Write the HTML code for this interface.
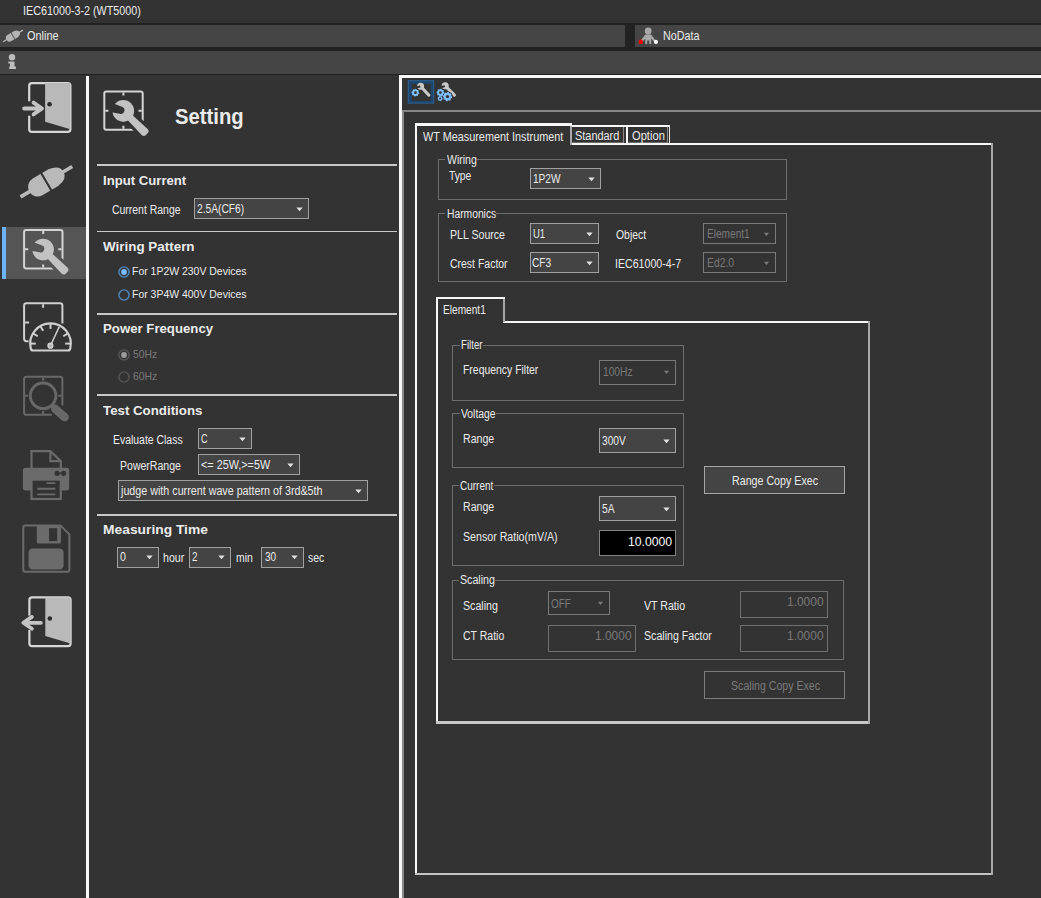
<!DOCTYPE html>
<html><head><meta charset="utf-8"><title>IEC61000-3-2 (WT5000)</title>
<style>
html,body{margin:0;padding:0;background:#333333;}
body{width:1041px;height:898px;position:relative;overflow:hidden;font-family:"Liberation Sans",sans-serif;}
#app div,#app span,#app svg{position:absolute;}
#app span{white-space:pre;line-height:1;transform-origin:0 0;display:block;}
</style></head><body><div id="app" style="position:absolute;left:0;top:0;width:1041px;height:898px;overflow:hidden">
<div style="left:0px;top:23px;width:1041px;height:2px;background:#222222"></div>
<div style="left:0px;top:25px;width:625px;height:22px;background:#454545"></div>
<div style="left:625px;top:25px;width:10px;height:22px;background:#222222"></div>
<div style="left:635px;top:25px;width:406px;height:22px;background:#454545"></div>
<div style="left:0px;top:47px;width:1041px;height:4px;background:#222222"></div>
<div style="left:0px;top:51px;width:1041px;height:22.5px;background:#454545"></div>
<div style="left:0px;top:73.5px;width:1041px;height:1.5px;background:#222222"></div>
<div style="left:2px;top:227px;width:85px;height:52px;background:#555555"></div>
<div style="left:2px;top:227px;width:4.2px;height:52px;background:#6cb4f7"></div>
<div style="left:86.3px;top:75.5px;width:3.1px;height:830px;background:#f8f8f8"></div>
<div style="left:97px;top:164.3px;width:299.5px;height:1.9px;background:#c8c8c8"></div>
<div style="left:97px;top:230.6px;width:299.5px;height:1.9px;background:#c8c8c8"></div>
<div style="left:97px;top:313.1px;width:299.5px;height:1.9px;background:#c8c8c8"></div>
<div style="left:97px;top:393.9px;width:299.5px;height:1.9px;background:#c8c8c8"></div>
<div style="left:97px;top:514.0px;width:299.5px;height:1.9px;background:#c8c8c8"></div>
<div style="left:399px;top:75.3px;width:642px;height:2.7px;background:#f8f8f8"></div>
<div style="left:399px;top:75.3px;width:3px;height:830px;background:#f8f8f8"></div>
<div style="left:402px;top:112px;width:1.6px;height:790px;background:#8a8a8a"></div>
<div style="left:402px;top:110.3px;width:639px;height:1.9px;background:#858585"></div>
<svg style="left:0;top:0" width="1041" height="898" viewBox="0 0 1041 898"><g transform="translate(13,35.9) rotate(-30.4) scale(0.385)"><rect x="-30" y="-1.8" width="60" height="3.6" fill="#b4b4b4"/><path d="M-10.2 -9.6H8Q19.8 -8.3 19.8 0Q19.8 8.3 8 9.6H-10.2A9.6 9.6 0 0 1 -10.2 -9.6z" fill="#b4b4b4"/><rect x="-1.2" y="-11" width="2.1" height="22" fill="#454545"/></g><circle cx="12" cy="57.2" r="3.2" fill="#bdbdbd"/><path d="M8.3 61.6H14.5V66.6H15.9V69H9.2V66.6H10V63.6H8.3z" fill="#bdbdbd"/><circle cx="648.2" cy="31" r="3.4" fill="#a9a9a9"/><path d="M645.4 34.6H651L656.3 41.2L654.6 42.4L651.2 38.6V44H649.3V40.4H647.2V44H645.3V38.6L642 42.4L640.2 41.2z" fill="#a9a9a9"/><circle cx="640.7" cy="41.9" r="2.3" fill="#f00000"/><circle cx="655.9" cy="41.9" r="2.1" fill="#ffffff"/><rect x="29.200000000000003" y="83.1" width="41.2" height="48.8" rx="2.6" fill="none" stroke="#d6d6d6" stroke-width="2.2"/><path d="M45.1 83.1H70.4V129.2L45.1 121.8z" fill="#b9b9b9"/><circle cx="49.6" cy="104.2" r="2.3" fill="#2b2b2b"/><rect x="27.1" y="101.3" width="4.5" height="14.4" fill="#333333"/><path d="M24.1 108.5H41.7M33.5 102.6L42.1 108.5L33.5 114.4" fill="none" stroke="#c4c4c4" stroke-width="3.8" stroke-linecap="round" stroke-linejoin="round"/><g transform="translate(46.4,181.7) rotate(-30.4) scale(1)"><rect x="-30" y="-1.8" width="60" height="3.6" fill="#b9b9b9"/><path d="M-10.2 -9.6H8Q19.8 -8.3 19.8 0Q19.8 8.3 8 9.6H-10.2A9.6 9.6 0 0 1 -10.2 -9.6z" fill="#b9b9b9"/><rect x="-1.2" y="-11" width="2.1" height="22" fill="#333333"/></g><rect x="24.1" y="230.0" width="38.4" height="38.4" rx="2.2" fill="none" stroke="#d4d4d4" stroke-width="2"/><path d="M43.2 231.0v3M43.2 267.4v-3M25.1 249.3h3.2M61.5 249.3h-3.2" stroke="#d4d4d4" stroke-width="2" fill="none"/><g transform="translate(43.1,249.5) rotate(44.5)"><path d="M6 -3.3L29.6 -4.2Q33 -4.2 33 -1.4V1.4Q33 4.2 29.6 4.2L6 3.3z" fill="#555555" stroke="#555555" stroke-width="6.4" stroke-linejoin="round"/></g><circle cx="43.1" cy="249.5" r="12.3" fill="#555555"/><g transform="translate(43.1,249.5) rotate(44.5)"><path d="M6 -3.3L29.6 -4.2Q33 -4.2 33 -1.4V1.4Q33 4.2 29.6 4.2L6 3.3z" fill="#c2c2c2"/></g><circle cx="43.1" cy="249.5" r="10.8" fill="#c2c2c2"/><g transform="translate(43.1,249.5) rotate(15.7)"><path d="M-14 -4.7L-2.6 -3.7A3.7 3.7 0 0 1 -2.6 3.7L-14 4.7z" fill="#555555"/></g><path d="M28.5 341.2H26.5Q24.1 341.2 24.1 338.8V305.6Q24.1 303.2 26.5 303.2H60Q62.4 303.2 62.4 305.6V323.4" fill="none" stroke="#cfcfcf" stroke-width="2"/><path d="M43.1 304.2v3.6M25.1 322.6h4" stroke="#cfcfcf" stroke-width="2" fill="none"/><path d="M30.64 347.82A20.3 20.3 0 1 1 70.36 347.82Q70.16 350.42 67.76 350.52H33.24Q30.84 350.42 30.64 347.82z" fill="none" stroke="#cfcfcf" stroke-width="2.2"/><line x1="30.70" y1="343.60" x2="35.80" y2="343.60" stroke="#cfcfcf" stroke-width="2"/><line x1="33.35" y1="333.70" x2="37.77" y2="336.25" stroke="#cfcfcf" stroke-width="2"/><line x1="40.60" y1="326.45" x2="43.15" y2="330.87" stroke="#cfcfcf" stroke-width="2"/><line x1="50.50" y1="323.80" x2="50.50" y2="328.90" stroke="#cfcfcf" stroke-width="2"/><line x1="67.65" y1="333.70" x2="63.23" y2="336.25" stroke="#cfcfcf" stroke-width="2"/><line x1="70.30" y1="343.60" x2="65.20" y2="343.60" stroke="#cfcfcf" stroke-width="2"/><line x1="50.4" y1="345.7" x2="59.3" y2="326.6" stroke="#cfcfcf" stroke-width="1.5"/><circle cx="50.4" cy="345.7" r="3.1" fill="#cfcfcf"/><circle cx="50.4" cy="345.7" r="1.3" fill="#aaa"/><path d="M51.9 414.8H26.5Q24.1 414.8 24.1 412.4V379.2Q24.1 376.8 26.5 376.8H60Q62.4 376.8 62.4 379.2V405.6" fill="none" stroke="#686868" stroke-width="2"/><path d="M43.1 377.8v3.6M43.1 413.8v-3.6M25.1 395.8h4M61.4 395.8h-4" stroke="#686868" stroke-width="2" fill="none"/><circle cx="43.1" cy="395.8" r="15.2" fill="#333333"/><line x1="53" y1="406.6" x2="65.2" y2="417.6" stroke="#333333" stroke-width="11.5" stroke-linecap="round"/><circle cx="43.1" cy="395.8" r="12.8" fill="none" stroke="#686868" stroke-width="2.9"/><line x1="55.2" y1="408.8" x2="64.6" y2="417.2" stroke="#686868" stroke-width="8.4" stroke-linecap="round"/><line x1="51.5" y1="404.8" x2="55" y2="408.4" stroke="#686868" stroke-width="3.4"/><path d="M31.5 468V451.1H50.4L60.8 461.2V468" fill="none" stroke="#6b6b6b" stroke-width="2.2"/><path d="M50.4 451.1V461.2H60.8" fill="none" stroke="#6b6b6b" stroke-width="2.2"/><rect x="22.9" y="467.7" width="46.3" height="22.7" rx="2.6" fill="#6b6b6b"/><circle cx="57.1" cy="473.3" r="2.6" fill="#353535"/><circle cx="63.6" cy="473.3" r="2.6" fill="#353535"/><rect x="57" y="472.6" width="6.6" height="1.4" fill="#353535"/><rect x="31.5" y="479.6" width="29.3" height="19.4" fill="#333333" stroke="#6b6b6b" stroke-width="2.2"/><path d="M46.5 483.1H55.4M37.3 488.8H55.4M37.3 494.4H55.4" stroke="#6b6b6b" stroke-width="1.9" fill="none"/><path d="M25.3 525.4H60.4L69.4 534.4V569.8Q69.4 571.8 67.4 571.8H25.3Q23.3 571.8 23.3 569.8V527.4Q23.3 525.4 25.3 525.4z" fill="none" stroke="#6b6b6b" stroke-width="2"/><path d="M36.8 525.4H60.9V542Q60.9 543.5 59.4 543.5H38.3Q36.8 543.5 36.8 542z" fill="#6b6b6b"/><rect x="49.1" y="528.2" width="8.1" height="12.9" fill="#333333"/><rect x="28.5" y="548.6" width="35.1" height="20.8" rx="4.2" fill="#6b6b6b"/><rect x="29.400000000000002" y="597.4" width="41.2" height="48.8" rx="2.6" fill="none" stroke="#d6d6d6" stroke-width="2.2"/><path d="M45.3 597.4H70.6V643.5L45.3 636.0999999999999z" fill="#b9b9b9"/><circle cx="49.8" cy="618.5" r="2.3" fill="#2b2b2b"/><rect x="27.3" y="615.5999999999999" width="4.5" height="14.4" fill="#333333"/><path d="M23.700000000000003 622.8H40.9M31.900000000000002 616.9L23.3 622.8L31.900000000000002 628.6999999999999" fill="none" stroke="#c4c4c4" stroke-width="3.8" stroke-linecap="round" stroke-linejoin="round"/><rect x="104.3" y="91.4" width="38.4" height="38.4" rx="2.2" fill="none" stroke="#d4d4d4" stroke-width="2"/><path d="M123.4 92.4v3M123.4 128.8v-3M105.3 110.7h3.2M141.7 110.7h-3.2" stroke="#d4d4d4" stroke-width="2" fill="none"/><g transform="translate(123.3,110.9) rotate(44.5)"><path d="M6 -3.3L29.6 -4.2Q33 -4.2 33 -1.4V1.4Q33 4.2 29.6 4.2L6 3.3z" fill="#333333" stroke="#333333" stroke-width="6.4" stroke-linejoin="round"/></g><circle cx="123.3" cy="110.9" r="12.3" fill="#333333"/><g transform="translate(123.3,110.9) rotate(44.5)"><path d="M6 -3.3L29.6 -4.2Q33 -4.2 33 -1.4V1.4Q33 4.2 29.6 4.2L6 3.3z" fill="#c2c2c2"/></g><circle cx="123.3" cy="110.9" r="10.8" fill="#c2c2c2"/><g transform="translate(123.3,110.9) rotate(15.7)"><path d="M-14 -4.7L-2.6 -3.7A3.7 3.7 0 0 1 -2.6 3.7L-14 4.7z" fill="#333333"/></g><rect x="408.3" y="80.7" width="25.4" height="22.4" fill="#1f456a" stroke="#2b6498" stroke-width="1"/><rect x="412" y="84" width="18.6" height="17" fill="#333333"/><line x1="420.6" y1="86.2" x2="428.9" y2="95.2" stroke="#c9c9c9" stroke-width="3.1" stroke-linecap="round"/><circle cx="420.6" cy="86.2" r="3.5" fill="#c9c9c9"/><g transform="translate(420.6,86.2) rotate(-20)"><rect x="-5" y="-1.1" width="4.6" height="2.2" fill="#333333"/></g><polygon points="419.30,92.89 419.18,93.65 418.36,94.10 418.03,94.65 418.02,95.59 417.41,96.05 416.50,95.78 415.88,95.94 415.21,96.60 414.45,96.48 414.00,95.66 413.45,95.33 412.51,95.32 412.05,94.71 412.32,93.80 412.16,93.18 411.50,92.51 411.62,91.75 412.44,91.30 412.77,90.75 412.78,89.81 413.39,89.35 414.30,89.62 414.92,89.46 415.59,88.80 416.35,88.92 416.80,89.74 417.35,90.07 418.29,90.08 418.75,90.69 418.48,91.60 418.64,92.22" fill="#7fc1ff"/><circle cx="415.4" cy="92.7" r="1.4" fill="#333333"/><line x1="445.2" y1="85.8" x2="454.4" y2="95.2" stroke="#c9c9c9" stroke-width="3.1" stroke-linecap="round"/><circle cx="445.2" cy="85.8" r="3.5" fill="#c9c9c9"/><g transform="translate(445.2,85.8) rotate(-20)"><rect x="-5" y="-1.1" width="4.6" height="2.2" fill="#333333"/></g><circle cx="447.5" cy="96.6" r="5.3" fill="#333333"/><polygon points="444.30,92.79 444.18,93.55 443.36,94.00 443.03,94.55 443.02,95.49 442.41,95.95 441.50,95.68 440.88,95.84 440.21,96.50 439.45,96.38 439.00,95.56 438.45,95.23 437.51,95.22 437.05,94.61 437.32,93.70 437.16,93.08 436.50,92.41 436.62,91.65 437.44,91.20 437.77,90.65 437.78,89.71 438.39,89.25 439.30,89.52 439.92,89.36 440.59,88.70 441.35,88.82 441.80,89.64 442.35,89.97 443.29,89.98 443.75,90.59 443.48,91.50 443.64,92.12" fill="#7fc1ff"/><circle cx="440.4" cy="92.6" r="1.4" fill="#333333"/><polygon points="442.69,98.67 442.56,99.34 441.92,99.71 441.54,100.14 441.25,100.83 440.61,101.05 439.96,100.68 439.40,100.57 438.66,100.66 438.15,100.21 438.14,99.47 437.96,98.93 437.51,98.33 437.64,97.66 438.28,97.29 438.66,96.86 438.95,96.17 439.59,95.95 440.24,96.32 440.80,96.43 441.54,96.34 442.05,96.79 442.06,97.53 442.24,98.07" fill="#7fc1ff"/><circle cx="440.1" cy="98.5" r="1.0" fill="#333333"/><polygon points="452.19,96.83 452.06,97.74 451.07,98.29 450.67,98.95 450.66,100.08 449.92,100.63 448.83,100.32 448.08,100.51 447.27,101.29 446.36,101.16 445.81,100.17 445.15,99.77 444.02,99.76 443.47,99.02 443.78,97.93 443.59,97.18 442.81,96.37 442.94,95.46 443.93,94.91 444.33,94.25 444.34,93.12 445.08,92.57 446.17,92.88 446.92,92.69 447.73,91.91 448.64,92.04 449.19,93.03 449.85,93.43 450.98,93.44 451.53,94.18 451.22,95.27 451.41,96.02" fill="#7fc1ff"/><circle cx="447.5" cy="96.6" r="1.7" fill="#333333"/></svg>
<div style="left:194px;top:198px;width:115px;height:21px;border:1.4px solid #a0a0a0;background:#444444;box-sizing:border-box;"></div><svg style="left:295.9px;top:206.5px" width="7" height="5" viewBox="0 0 7 5"><path d="M0.3 0.6h6.4L3.5 4.2z" fill="#e0e0e0"/></svg>
<div style="left:198px;top:428px;width:54.3px;height:21px;border:1.4px solid #a0a0a0;background:#444444;box-sizing:border-box;"></div><svg style="left:239.20000000000002px;top:436.5px" width="7" height="5" viewBox="0 0 7 5"><path d="M0.3 0.6h6.4L3.5 4.2z" fill="#e0e0e0"/></svg>
<div style="left:198px;top:454.2px;width:101.6px;height:21px;border:1.4px solid #a0a0a0;background:#444444;box-sizing:border-box;"></div><svg style="left:286.5px;top:462.7px" width="7" height="5" viewBox="0 0 7 5"><path d="M0.3 0.6h6.4L3.5 4.2z" fill="#e0e0e0"/></svg>
<div style="left:118.4px;top:480px;width:249.5px;height:21px;border:1.4px solid #a0a0a0;background:#444444;box-sizing:border-box;"></div><svg style="left:354.79999999999995px;top:488.5px" width="7" height="5" viewBox="0 0 7 5"><path d="M0.3 0.6h6.4L3.5 4.2z" fill="#e0e0e0"/></svg>
<div style="left:116.5px;top:546.5px;width:42.4px;height:21px;border:1.4px solid #a0a0a0;background:#444444;box-sizing:border-box;"></div><svg style="left:145.8px;top:555.0px" width="7" height="5" viewBox="0 0 7 5"><path d="M0.3 0.6h6.4L3.5 4.2z" fill="#e0e0e0"/></svg>
<div style="left:189px;top:546.5px;width:42.2px;height:21px;border:1.4px solid #a0a0a0;background:#444444;box-sizing:border-box;"></div><svg style="left:218.1px;top:555.0px" width="7" height="5" viewBox="0 0 7 5"><path d="M0.3 0.6h6.4L3.5 4.2z" fill="#e0e0e0"/></svg>
<div style="left:261px;top:546.5px;width:42.8px;height:21px;border:1.4px solid #a0a0a0;background:#444444;box-sizing:border-box;"></div><svg style="left:290.7px;top:555.0px" width="7" height="5" viewBox="0 0 7 5"><path d="M0.3 0.6h6.4L3.5 4.2z" fill="#e0e0e0"/></svg>
<svg style="left:116.85px;top:265px" width="14" height="14" viewBox="0 0 14 14"><circle cx="7" cy="7" r="5.1" fill="#333333" stroke="#5289bd" stroke-width="1.4"/><circle cx="7" cy="7" r="2.9" fill="#78bbff"/></svg>
<svg style="left:116.85px;top:288px" width="14" height="14" viewBox="0 0 14 14"><circle cx="7" cy="7" r="5.1" fill="#333333" stroke="#5289bd" stroke-width="1.4"/></svg>
<svg style="left:116.8px;top:347.9px" width="14" height="14" viewBox="0 0 14 14"><circle cx="7" cy="7" r="5.1" fill="#333333" stroke="#565656" stroke-width="1.4"/><circle cx="7" cy="7" r="2.9" fill="#9c9c9c"/></svg>
<svg style="left:116.8px;top:370.2px" width="14" height="14" viewBox="0 0 14 14"><circle cx="7" cy="7" r="5.1" fill="#333333" stroke="#565656" stroke-width="1.4"/></svg>
<div style="left:415px;top:143px;width:578px;height:2.2px;background:#f8f8f8"></div>
<div style="left:415px;top:124px;width:2.3px;height:751px;background:#f8f8f8"></div>
<div style="left:415px;top:872.7px;width:578.3px;height:2.2px;background:#c4c4c4"></div>
<div style="left:991.3px;top:143px;width:2.2px;height:732px;background:#a8a8a8"></div>
<div style="left:415px;top:123.3px;width:156.6px;height:2.7px;background:#f8f8f8"></div>
<div style="left:569.6px;top:125.5px;width:2.0px;height:19.4px;background:#a8a8a8"></div>
<div style="left:417.3px;top:126px;width:152.3px;height:19.5px;background:#333333"></div>
<div style="left:571.7px;top:125.4px;width:54.3px;height:2.0px;background:#f8f8f8"></div><div style="left:622.6px;top:127px;width:1.3px;height:16.2px;background:#8a8a8a"></div><div style="left:572.2px;top:142.2px;width:50.4px;height:0.9px;background:#6a6a6a"></div>
<div style="left:626.0px;top:125.4px;width:44.4px;height:2.0px;background:#f8f8f8"></div><div style="left:626.0px;top:125.4px;width:2.0px;height:18px;background:#f8f8f8"></div><div style="left:667.0px;top:127px;width:1.3px;height:16.2px;background:#8a8a8a"></div><div style="left:668.6px;top:125.4px;width:1.8px;height:18px;background:#e6e6e6"></div><div style="left:628.0px;top:142.2px;width:39.0px;height:0.9px;background:#6a6a6a"></div>
<div style="left:438px;top:159.2px;width:349.3px;height:40.8px;border:1px solid #6e6e6e;box-sizing:border-box;"></div><div style="left:445.40000000000003px;top:158.2px;width:31.0px;height:3px;background:#333333"></div>
<div style="left:438px;top:213px;width:349.3px;height:68.6px;border:1px solid #6e6e6e;box-sizing:border-box;"></div><div style="left:445.40000000000003px;top:212px;width:51.0px;height:3px;background:#333333"></div>
<div style="left:529.5px;top:168px;width:71.5px;height:21px;border:1.4px solid #a0a0a0;background:#444444;box-sizing:border-box;"></div><svg style="left:587.9px;top:176.5px" width="7" height="5" viewBox="0 0 7 5"><path d="M0.3 0.6h6.4L3.5 4.2z" fill="#e0e0e0"/></svg>
<div style="left:529.5px;top:223.3px;width:69.5px;height:20.7px;border:1.4px solid #a0a0a0;background:#444444;box-sizing:border-box;"></div><svg style="left:585.9px;top:231.65px" width="7" height="5" viewBox="0 0 7 5"><path d="M0.3 0.6h6.4L3.5 4.2z" fill="#e0e0e0"/></svg>
<div style="left:529.5px;top:252.2px;width:69.5px;height:20.8px;border:1.4px solid #a0a0a0;background:#444444;box-sizing:border-box;"></div><svg style="left:585.9px;top:260.59999999999997px" width="7" height="5" viewBox="0 0 7 5"><path d="M0.3 0.6h6.4L3.5 4.2z" fill="#e0e0e0"/></svg>
<div style="left:703.3px;top:223.3px;width:72.8px;height:20.7px;border:1.2px solid #7a7a7a;background:#333333;box-sizing:border-box;"></div><svg style="left:762.9999999999999px;top:231.65px" width="7" height="5" viewBox="0 0 7 5"><path d="M0.9 0.8h5.2L3.5 3.9z" fill="#7a7a7a"/></svg>
<div style="left:703.3px;top:252.2px;width:72.8px;height:20.8px;border:1.2px solid #7a7a7a;background:#333333;box-sizing:border-box;"></div><svg style="left:762.9999999999999px;top:260.59999999999997px" width="7" height="5" viewBox="0 0 7 5"><path d="M0.9 0.8h5.2L3.5 3.9z" fill="#7a7a7a"/></svg>
<div style="left:436px;top:321.2px;width:434px;height:2.3px;background:#f6f6f6"></div>
<div style="left:436px;top:297px;width:2.4px;height:427px;background:#f6f6f6"></div>
<div style="left:436px;top:721.2px;width:434.1px;height:2.4px;background:#c8c8c8"></div>
<div style="left:867.8px;top:321.2px;width:2.3px;height:402.4px;background:#a8a8a8"></div>
<div style="left:436px;top:297px;width:69.2px;height:2.5px;background:#f6f6f6"></div>
<div style="left:503.1px;top:299px;width:2.1px;height:22.5px;background:#a6a6a6"></div>
<div style="left:438.4px;top:299.4px;width:64.7px;height:24.5px;background:#333333"></div>
<div style="left:452.3px;top:345px;width:231.8px;height:55.8px;border:1px solid #6e6e6e;box-sizing:border-box;"></div><div style="left:459.5px;top:344px;width:23.3px;height:3px;background:#333333"></div>
<div style="left:452.3px;top:413.4px;width:231.8px;height:55px;border:1px solid #6e6e6e;box-sizing:border-box;"></div><div style="left:459.5px;top:412.4px;width:36.699999999999996px;height:3px;background:#333333"></div>
<div style="left:452.3px;top:485.4px;width:231.8px;height:81px;border:1px solid #6e6e6e;box-sizing:border-box;"></div><div style="left:458.5px;top:484.4px;width:35.599999999999994px;height:3px;background:#333333"></div>
<div style="left:452.3px;top:579.9px;width:391.7px;height:80.6px;border:1px solid #6e6e6e;box-sizing:border-box;"></div><div style="left:459.2px;top:578.9px;width:36.099999999999994px;height:3px;background:#333333"></div>
<div style="left:599px;top:359.5px;width:77.2px;height:25.5px;border:1.2px solid #7a7a7a;background:#333333;box-sizing:border-box;"></div><svg style="left:663.1px;top:370.25px" width="7" height="5" viewBox="0 0 7 5"><path d="M0.9 0.8h5.2L3.5 3.9z" fill="#7a7a7a"/></svg>
<div style="left:599px;top:428px;width:77.3px;height:25px;border:1.4px solid #a0a0a0;background:#444444;box-sizing:border-box;"></div><svg style="left:663.1999999999999px;top:438.5px" width="7" height="5" viewBox="0 0 7 5"><path d="M0.3 0.6h6.4L3.5 4.2z" fill="#e0e0e0"/></svg>
<div style="left:599px;top:496.3px;width:77.3px;height:25px;border:1.4px solid #a0a0a0;background:#444444;box-sizing:border-box;"></div><svg style="left:663.1999999999999px;top:506.8px" width="7" height="5" viewBox="0 0 7 5"><path d="M0.3 0.6h6.4L3.5 4.2z" fill="#e0e0e0"/></svg>
<div style="left:599px;top:530.3px;width:77.3px;height:26px;background:#000;border:1.2px solid #848484;box-sizing:border-box;"></div>
<div style="left:547.8px;top:591px;width:62.7px;height:24.3px;border:1.2px solid #7a7a7a;background:#333333;box-sizing:border-box;"></div><svg style="left:597.4px;top:601.15px" width="7" height="5" viewBox="0 0 7 5"><path d="M0.9 0.8h5.2L3.5 3.9z" fill="#7a7a7a"/></svg>
<div style="left:739.5px;top:591px;width:88.4px;height:27.3px;border:1px solid #707070;box-sizing:border-box;background:#333333;"></div>
<div style="left:739.5px;top:625.2px;width:88.4px;height:27.3px;border:1px solid #707070;box-sizing:border-box;background:#333333;"></div>
<div style="left:547.8px;top:625.2px;width:88.4px;height:27.3px;border:1px solid #707070;box-sizing:border-box;background:#333333;"></div>
<div style="left:704.2px;top:466.2px;width:141.3px;height:27.7px;background:#444444;border:1.3px solid #a6a6a6;box-sizing:border-box;"></div>
<div style="left:704.2px;top:671.3px;width:141.3px;height:27.5px;background:#333333;border:1px solid #7d7d7d;box-sizing:border-box;"></div>
<span style="left:23.10px;top:5.04px;font-size:12px;font-weight:normal;color:#ebebeb;transform:scaleX(0.8973)">IEC61000-3-2 (WT5000)</span>
<span style="left:27.00px;top:30.14px;font-size:12px;font-weight:normal;color:#ebebeb;transform:scaleX(0.9082)">Online</span>
<span style="left:662.80px;top:29.64px;font-size:12px;font-weight:normal;color:#ebebeb;transform:scaleX(0.8997)">NoData</span>
<span style="left:174.60px;top:106.54px;font-size:21.33px;font-weight:bold;color:#ebebeb;transform:scaleX(0.9502)">Setting</span>
<span style="left:103.00px;top:173.92px;font-size:13.33px;font-weight:bold;color:#ebebeb;transform:scaleX(0.9863)">Input Current</span>
<span style="left:112.20px;top:203.84px;font-size:12px;font-weight:normal;color:#ebebeb;transform:scaleX(0.8705)">Current Range</span>
<span style="left:197.30px;top:202.84px;font-size:12px;font-weight:normal;color:#ebebeb;transform:scaleX(0.8527)">2.5A(CF6)</span>
<span style="left:102.70px;top:239.72px;font-size:13.33px;font-weight:bold;color:#ebebeb;transform:scaleX(1.0064)">Wiring Pattern</span>
<span style="left:131.90px;top:265.79px;font-size:11px;font-weight:normal;color:#ebebeb;transform:scaleX(0.9509)">For 1P2W 230V Devices</span>
<span style="left:131.90px;top:288.79px;font-size:11px;font-weight:normal;color:#ebebeb;transform:scaleX(0.9509)">For 3P4W 400V Devices</span>
<span style="left:103.00px;top:322.02px;font-size:13.33px;font-weight:bold;color:#ebebeb;transform:scaleX(0.9911)">Power Frequency</span>
<span style="left:132.80px;top:349.49px;font-size:11px;font-weight:normal;color:#7a7a7a;transform:scaleX(0.9413)">50Hz</span>
<span style="left:132.80px;top:371.39px;font-size:11px;font-weight:normal;color:#7a7a7a;transform:scaleX(0.9413)">60Hz</span>
<span style="left:103.10px;top:403.62px;font-size:13.33px;font-weight:bold;color:#ebebeb;transform:scaleX(0.9970)">Test Conditions</span>
<span style="left:112.70px;top:433.84px;font-size:12px;font-weight:normal;color:#ebebeb;transform:scaleX(0.8696)">Evaluate Class</span>
<span style="left:200.70px;top:432.84px;font-size:12px;font-weight:normal;color:#ebebeb;transform:scaleX(0.7556)">C</span>
<span style="left:119.90px;top:459.74px;font-size:12px;font-weight:normal;color:#ebebeb;transform:scaleX(0.8780)">PowerRange</span>
<span style="left:201.00px;top:458.84px;font-size:12px;font-weight:normal;color:#ebebeb;transform:scaleX(0.9007)">&lt;= 25W,&gt;=5W</span>
<span style="left:121.29px;top:485.14px;font-size:12px;font-weight:normal;color:#ebebeb;transform:scaleX(0.8938)">judge with current wave pattern of 3rd&amp;5th</span>
<span style="left:103.00px;top:523.22px;font-size:13.33px;font-weight:bold;color:#ebebeb;transform:scaleX(1.0366)">Measuring Time</span>
<span style="left:119.60px;top:551.34px;font-size:12px;font-weight:normal;color:#ebebeb;transform:scaleX(0.8857)">0</span>
<span style="left:163.40px;top:552.14px;font-size:12px;font-weight:normal;color:#ebebeb;transform:scaleX(0.8825)">hour</span>
<span style="left:191.90px;top:551.34px;font-size:12px;font-weight:normal;color:#ebebeb;transform:scaleX(0.8286)">2</span>
<span style="left:235.60px;top:552.14px;font-size:12px;font-weight:normal;color:#ebebeb;transform:scaleX(0.8681)">min</span>
<span style="left:264.60px;top:551.34px;font-size:12px;font-weight:normal;color:#ebebeb;transform:scaleX(0.8337)">30</span>
<span style="left:308.40px;top:552.14px;font-size:12px;font-weight:normal;color:#ebebeb;transform:scaleX(0.8622)">sec</span>
<span style="left:422.60px;top:130.84px;font-size:12px;font-weight:normal;color:#ebebeb;transform:scaleX(0.9042)">WT Measurement Instrument</span>
<span style="left:575.20px;top:129.54px;font-size:12px;font-weight:normal;color:#ebebeb;transform:scaleX(0.9099)">Standard</span>
<span style="left:631.60px;top:129.54px;font-size:12px;font-weight:normal;color:#ebebeb;transform:scaleX(0.9284)">Option</span>
<span style="left:446.60px;top:154.14px;font-size:12px;font-weight:normal;color:#ebebeb;transform:scaleX(0.8761)">Wiring</span>
<span style="left:449.20px;top:169.84px;font-size:12px;font-weight:normal;color:#ebebeb;transform:scaleX(0.8580)">Type</span>
<span style="left:533.40px;top:172.54px;font-size:12px;font-weight:normal;color:#ebebeb;transform:scaleX(0.8425)">1P2W</span>
<span style="left:446.60px;top:207.84px;font-size:12px;font-weight:normal;color:#ebebeb;transform:scaleX(0.8580)">Harmonics</span>
<span style="left:450.30px;top:228.64px;font-size:12px;font-weight:normal;color:#ebebeb;transform:scaleX(0.8837)">PLL Source</span>
<span style="left:533.00px;top:227.84px;font-size:12px;font-weight:normal;color:#ebebeb;transform:scaleX(0.7915)">U1</span>
<span style="left:615.60px;top:228.64px;font-size:12px;font-weight:normal;color:#ebebeb;transform:scaleX(0.8685)">Object</span>
<span style="left:706.90px;top:227.84px;font-size:12px;font-weight:normal;color:#7a7a7a;transform:scaleX(0.8428)">Element1</span>
<span style="left:450.00px;top:257.84px;font-size:12px;font-weight:normal;color:#ebebeb;transform:scaleX(0.8725)">Crest Factor</span>
<span style="left:532.30px;top:256.94px;font-size:12px;font-weight:normal;color:#ebebeb;transform:scaleX(0.8480)">CF3</span>
<span style="left:615.12px;top:258.14px;font-size:12px;font-weight:normal;color:#ebebeb;transform:scaleX(0.8847)">IEC61000-4-7</span>
<span style="left:706.90px;top:256.84px;font-size:12px;font-weight:normal;color:#7a7a7a;transform:scaleX(0.8616)">Ed2.0</span>
<span style="left:443.40px;top:304.04px;font-size:12px;font-weight:normal;color:#ebebeb;transform:scaleX(0.8447)">Element1</span>
<span style="left:460.70px;top:339.44px;font-size:12px;font-weight:normal;color:#ebebeb;transform:scaleX(0.8062)">Filter</span>
<span style="left:463.40px;top:364.34px;font-size:12px;font-weight:normal;color:#ebebeb;transform:scaleX(0.8685)">Frequency Filter</span>
<span style="left:602.70px;top:366.44px;font-size:12px;font-weight:normal;color:#7a7a7a;transform:scaleX(0.8505)">100Hz</span>
<span style="left:460.70px;top:407.54px;font-size:12px;font-weight:normal;color:#ebebeb;transform:scaleX(0.8646)">Voltage</span>
<span style="left:463.40px;top:432.84px;font-size:12px;font-weight:normal;color:#ebebeb;transform:scaleX(0.8827)">Range</span>
<span style="left:602.30px;top:434.84px;font-size:12px;font-weight:normal;color:#ebebeb;transform:scaleX(0.8493)">300V</span>
<span style="left:459.70px;top:479.84px;font-size:12px;font-weight:normal;color:#ebebeb;transform:scaleX(0.8309)">Current</span>
<span style="left:463.40px;top:500.84px;font-size:12px;font-weight:normal;color:#ebebeb;transform:scaleX(0.8827)">Range</span>
<span style="left:602.40px;top:502.64px;font-size:12px;font-weight:normal;color:#ebebeb;transform:scaleX(0.8587)">5A</span>
<span style="left:463.40px;top:531.34px;font-size:12px;font-weight:normal;color:#ebebeb;transform:scaleX(0.8866)">Sensor Ratio(mV/A)</span>
<span style="left:628.00px;top:535.54px;font-size:12px;font-weight:normal;color:#ffffff;transform:scaleX(1.0159)">10.0000</span>
<span style="left:731.70px;top:474.84px;font-size:12px;font-weight:normal;color:#ebebeb;transform:scaleX(0.8892)">Range Copy Exec</span>
<span style="left:460.40px;top:574.34px;font-size:12px;font-weight:normal;color:#ebebeb;transform:scaleX(0.8867)">Scaling</span>
<span style="left:463.10px;top:599.74px;font-size:12px;font-weight:normal;color:#ebebeb;transform:scaleX(0.8867)">Scaling</span>
<span style="left:550.50px;top:597.84px;font-size:12px;font-weight:normal;color:#7a7a7a;transform:scaleX(0.8283)">OFF</span>
<span style="left:644.10px;top:599.64px;font-size:12px;font-weight:normal;color:#ebebeb;transform:scaleX(0.8828)">VT Ratio</span>
<span style="left:787.00px;top:595.64px;font-size:12px;font-weight:normal;color:#7a7a7a;transform:scaleX(0.9965)">1.0000</span>
<span style="left:462.90px;top:629.84px;font-size:12px;font-weight:normal;color:#ebebeb;transform:scaleX(0.8748)">CT Ratio</span>
<span style="left:594.80px;top:629.84px;font-size:12px;font-weight:normal;color:#7a7a7a;transform:scaleX(0.9965)">1.0000</span>
<span style="left:644.10px;top:629.84px;font-size:12px;font-weight:normal;color:#ebebeb;transform:scaleX(0.8852)">Scaling Factor</span>
<span style="left:787.00px;top:629.84px;font-size:12px;font-weight:normal;color:#7a7a7a;transform:scaleX(0.9965)">1.0000</span>
<span style="left:730.70px;top:679.84px;font-size:12px;font-weight:normal;color:#7a7a7a;transform:scaleX(0.8837)">Scaling Copy Exec</span>
</div></body></html>
